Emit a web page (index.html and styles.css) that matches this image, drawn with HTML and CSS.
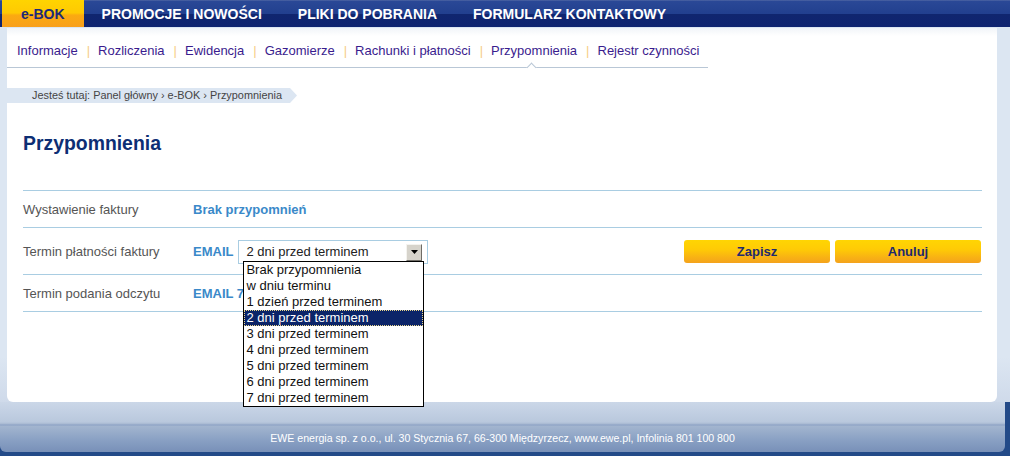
FILE: index.html
```html
<!DOCTYPE html>
<html lang="pl">
<head>
<meta charset="utf-8">
<title>e-BOK – Przypomnienia</title>
<link rel="stylesheet" href="styles.css">
</head>
<body>
<header class="topbar">
  <a class="tab tab-active" href="#">e-BOK</a>
  <a class="tab" href="#">PROMOCJE I NOWOŚCI</a>
  <a class="tab" href="#">PLIKI DO POBRANIA</a>
  <a class="tab" href="#">FORMULARZ KONTAKTOWY</a>
</header>
<div class="main">
  <div class="panel">
    <nav class="subnav">
      <a href="#">Informacje</a><span class="sep">|</span>
      <a href="#">Rozliczenia</a><span class="sep">|</span>
      <a href="#">Ewidencja</a><span class="sep">|</span>
      <a href="#">Gazomierze</a><span class="sep">|</span>
      <a href="#">Rachunki i płatności</a><span class="sep">|</span>
      <a href="#" class="current">Przypomnienia</a><span class="sep">|</span>
      <a href="#">Rejestr czynności</a>
    </nav>
    <div class="crumbs">Jesteś tutaj: Panel główny <span class="arr">›</span> e-BOK <span class="arr">›</span> Przypomnienia</div>
    <div class="content">
      <h1 class="title">Przypomnienia</h1>
      <div class="table">
        <div class="row">
          <div class="label">Wystawienie faktury</div>
          <div class="value">Brak przypomnień</div>
        </div>
        <div class="row row-tall">
          <div class="label">Termin płatności faktury</div>
          <div class="value">EMAIL</div>
          <div class="select-wrap">
            <div class="select">
              <span class="select-text">2 dni przed terminem</span>
              <span class="select-btn"><svg width="7" height="4" viewBox="0 0 7 4"><path d="M0 0h7L3.5 4z" fill="#000"/></svg></span>
            </div>
            <ul class="options">
              <li>Brak przypomnienia</li>
              <li>w dniu terminu</li>
              <li>1 dzień przed terminem</li>
              <li class="sel">2 dni przed terminem</li>
              <li>3 dni przed terminem</li>
              <li>4 dni przed terminem</li>
              <li>5 dni przed terminem</li>
              <li>6 dni przed terminem</li>
              <li>7 dni przed terminem</li>
            </ul>
          </div>
          <div class="buttons">
            <button class="btn">Zapisz</button>
            <button class="btn">Anuluj</button>
          </div>
        </div>
        <div class="row">
          <div class="label">Termin podania odczytu</div>
          <div class="value">EMAIL 7</div>
        </div>
      </div>
    </div>
  </div>
</div>
<footer class="footer">
  <div class="footer-top"></div>
  <div class="footer-text">EWE energia sp. z o.o., ul. 30 Stycznia 67, 66-300 Międzyrzecz, www.ewe.pl, Infolinia 801 100 800</div>
</footer>
</body>
</html>
```
FILE: styles.css
```css
* { box-sizing: border-box; }
html, body { margin: 0; padding: 0; }
body {
  width: 1010px;
  height: 456px;
  overflow: hidden;
  background: #234a88;
  font-family: Arial, "Liberation Sans", sans-serif;
}
a { text-decoration: none; }

/* top bar */
.topbar {
  height: 27px;
  display: flex;
  padding-left: 2px;
  background: linear-gradient(#5a6fa8 0, #2a4896 4%, #22408f 50%, #10266f 53%, #0f2470 100%);
}
.tab {
  display: flex;
  align-items: center;
  padding: 1px 18px 0 18px;
  color: #fff;
  font-weight: bold;
  font-size: 14px;
  white-space: nowrap;
}
.tab-active {
  padding: 1px 19px 0 19px;
  color: #1c2a78;
  background: linear-gradient(#ffd400 0, #ffc903 48%, #fbaa10 56%, #f89f1c 100%);
}

/* main area */
.main {
  height: 375px;
  padding: 1px 13px 0 7px;
  background: linear-gradient(#dce6f2 0, #dce6f2 88%, #cfdaea 100%);
}
.panel {
  height: 374px;
  background: linear-gradient(#f1f4f8 0, #ffffff 8px, #ffffff 100%);
  border-radius: 0 0 6px 6px;
}

/* subnav */
.subnav {
  width: 701px;
  padding: 15px 0 8px 10px;
  border-bottom: 1px solid #b9c7d6;
  display: flex;
  font-size: 13px;
  line-height: 16px;
  white-space: nowrap;
}
.subnav a { color: #3a1c8e; position: relative; flex-shrink: 0; }
.subnav .sep { color: #f6cd86; padding: 0 8px 0 9px; flex-shrink: 0; }
.subnav a.current::after {
  content: "";
  position: absolute;
  left: 37px;
  bottom: -12px;
  width: 6px;
  height: 6px;
  background: #fff;
  border-top: 1px solid #b9c7d6;
  border-left: 1px solid #b9c7d6;
  transform: rotate(45deg);
}

/* breadcrumbs */
.crumbs {
  margin-top: 20px;
  width: 290px;
  height: 15px;
  line-height: 15px;
  padding-left: 25px;
  font-size: 10.9px;
  color: #444;
  white-space: nowrap;
  background: #dce6f2;
  clip-path: polygon(0 0, 283px 0, 290px 50%, 283px 100%, 0 100%);
}

/* content */
.content { padding: 0 15px 0 16px; }
.title {
  margin: 29px 0 0 0;
  height: 22px;
  font-size: 19.4px;
  line-height: 22px;
  font-weight: bold;
  color: #0d2e74;
}
.table {
  margin-top: 36px;
  border-bottom: 1px solid #a9cde2;
}
.row {
  display: flex;
  align-items: center;
  height: 37px;
  border-top: 1px solid #a9cde2;
  font-size: 13px;
}
.row-tall { height: 47px; }
.label {
  width: 170px;
  color: #555;
}
.value {
  color: #3a89c9;
  font-weight: bold;
  white-space: nowrap;
}

/* select */
.select-wrap {
  position: relative;
  margin-left: 5px;
  margin-top: 1px;
}
.select {
  width: 190px;
  height: 24px;
  border: 1px solid #a9cde2;
  display: flex;
  align-items: center;
  justify-content: space-between;
  padding: 0 5px 0 7px;
}
.select-text { color: #222; font-size: 13px; }
.select-btn {
  width: 16px;
  height: 17px;
  margin-top: 1px;
  display: flex;
  align-items: center;
  justify-content: center;
  background: #d6d3cb;
  border: 1px solid;
  border-color: #f4f3ef #6f6c66 #6f6c66 #f4f3ef;
}
.options {
  position: absolute;
  left: 5px;
  top: 21px;
  width: 181px;
  margin: 0;
  padding: 0;
  list-style: none;
  background: #fff;
  border: 1px solid #000;
  z-index: 5;
}
.options li {
  height: 16px;
  line-height: 16px;
  padding-left: 2px;
  font-size: 13px;
  color: #111;
  white-space: nowrap;
}
.options li.sel {
  background: #0b2468;
  color: #fff;
  outline: 1px dotted #e8d58a;
  outline-offset: -1px;
}

/* buttons */
.buttons {
  margin-left: auto;
  display: flex;
  gap: 5px;
  margin-right: 1px;
}
.btn {
  width: 146px;
  height: 23px;
  border: none;
  border-radius: 3px;
  background: linear-gradient(#ffd503 0, #ffcb05 40%, #f8b214 75%, #f4a21c 100%);
  color: #1f2a6e;
  font-family: Arial, "Liberation Sans", sans-serif;
  font-weight: bold;
  font-size: 13px;
  padding: 0;
}

/* footer */
.footer {
  width: 1005px;
  height: 50px;
  border-radius: 0 0 6px 6px;
  background: linear-gradient(#cbd7e8 0, #b9c8dd 40%, #a7b8d1 44%, #8aa0c4 46%, #a3b5cf 48%, #8aa1c4 75%, #7890b8 100%);
}
.footer-top { height: 30px; }
.footer-text {
  text-align: center;
  font-size: 10.6px;
  line-height: 12px;
  color: #fff;
  white-space: nowrap;
}
```
